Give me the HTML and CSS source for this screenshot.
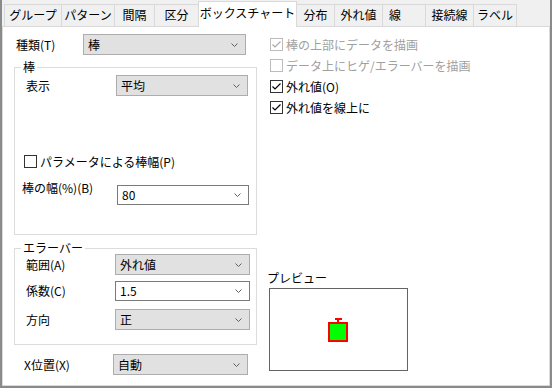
FILE: index.html
```html
<!DOCTYPE html>
<html lang="ja">
<head>
  <meta charset="UTF-8" />
  <title>ボックスチャート</title>
  <link rel="stylesheet" href="styles.css">
</head>
<body>

<div class="dialog">
  <div class="tabs">
    <div class="tab tab-group">グループ</div>
    <div class="tab tab-pattern">パターン</div>
    <div class="tab tab-gap">間隔</div>
    <div class="tab tab-div">区分</div>
    <div class="tab tab-box active">ボックスチャート</div>
    <div class="tab tab-dist">分布</div>
    <div class="tab tab-out">外れ値</div>
    <div class="tab tab-line">線</div>
    <div class="tab tab-conn">接続線</div>
    <div class="tab tab-label">ラベル</div>
  </div>

  <div class="panel">
    <!-- left column -->
    <div class="col-left">
      <div class="row row-type">
        <span class="lbl lbl-type">種類(T)</span>
        <div class="combo combo-type"><span>棒</span><svg class="chev" width="7" height="4"><polyline points="0.5,0.5 3.5,3.5 6.5,0.5"/></svg></div>
      </div>

      <fieldset class="group group-bar">
        <legend>棒</legend>
        <div class="row row-show">
          <span class="lbl lbl-show">表示</span>
          <div class="combo combo-show"><span>平均</span><svg class="chev" width="7" height="4"><polyline points="0.5,0.5 3.5,3.5 6.5,0.5"/></svg></div>
        </div>
        <label class="checkrow checkrow-param">
          <span class="check"></span>
          <span>パラメータによる棒幅(P)</span>
        </label>
        <div class="row row-width">
          <span class="lbl lbl-width">棒の幅(%)(B)</span>
          <div class="combo edit combo-width"><span>80</span><svg class="chev" width="7" height="4"><polyline points="0.5,0.5 3.5,3.5 6.5,0.5"/></svg></div>
        </div>
      </fieldset>

      <fieldset class="group group-err">
        <legend>エラーバー</legend>
        <div class="row row-range">
          <span class="lbl lbl-err">範囲(A)</span>
          <div class="combo combo-err"><span>外れ値</span><svg class="chev" width="7" height="4"><polyline points="0.5,0.5 3.5,3.5 6.5,0.5"/></svg></div>
        </div>
        <div class="row row-coef">
          <span class="lbl lbl-err">係数(C)</span>
          <div class="combo edit combo-err"><span>1.5</span><svg class="chev" width="7" height="4"><polyline points="0.5,0.5 3.5,3.5 6.5,0.5"/></svg></div>
        </div>
        <div class="row row-dir">
          <span class="lbl lbl-err">方向</span>
          <div class="combo combo-err"><span>正</span><svg class="chev" width="7" height="4"><polyline points="0.5,0.5 3.5,3.5 6.5,0.5"/></svg></div>
        </div>
      </fieldset>

      <div class="row row-xpos">
        <span class="lbl lbl-xpos">X位置(X)</span>
        <div class="combo combo-xpos"><span>自動</span><svg class="chev" width="7" height="4"><polyline points="0.5,0.5 3.5,3.5 6.5,0.5"/></svg></div>
      </div>
    </div>

    <!-- right column -->
    <div class="col-right">
      <label class="checkrow disabled">
        <span class="check"><svg width="11" height="11"><polyline points="1.5,5.5 4,8 9.5,2.5"/></svg></span>
        <span>棒の上部にデータを描画</span>
      </label>
      <label class="checkrow disabled">
        <span class="check"></span>
        <span>データ上にヒゲ/エラーバーを描画</span>
      </label>
      <label class="checkrow">
        <span class="check"><svg width="11" height="11"><polyline points="1.5,5.5 4,8 9.5,2.5"/></svg></span>
        <span>外れ値(O)</span>
      </label>
      <label class="checkrow">
        <span class="check"><svg width="11" height="11"><polyline points="1.5,5.5 4,8 9.5,2.5"/></svg></span>
        <span>外れ値を線上に</span>
      </label>

      <div class="preview">
        <div class="preview-title">プレビュー</div>
        <div class="preview-box">
          <svg width="137" height="81">
            <line x1="65" y1="30" x2="72" y2="30" stroke="#ff0000" stroke-width="2"/>
            <line x1="68" y1="30" x2="68" y2="34" stroke="#ff0000" stroke-width="2"/>
            <rect x="59" y="34" width="18" height="18" fill="#00ff00" stroke="#ff0000" stroke-width="2"/>
          </svg>
        </div>
      </div>
    </div>
  </div>
</div>

</body>
</html>
```

FILE: styles.css
```css
body {
  margin: 0;
  font-family: "Noto Sans CJK JP", "Noto Sans", sans-serif;
  font-size: 12px;
  color: #000;
  background: #f0f0f0;
}

.dialog {
  width: 552px;
  height: 388px;
  box-sizing: border-box;
  background: #f0f0f0;
  border-left: 2px solid #8a8a8a;
  border-right: 2px solid #8a8a8a;
  border-bottom: 2px solid #8a8a8a;
  display: flex;
  flex-direction: column;
}

/* Tabs */
.tabs {
  display: flex;
  align-items: flex-end;
  height: 26px;
  padding-left: 2px;
}

.tab {
  height: 22px;
  box-sizing: border-box;
  border: 1px solid #d9d9d9;
  border-bottom: none;
  margin-right: -1px;
  background: #f0f0f0;
  line-height: 20px;
  text-align: center;
  white-space: nowrap;
}

.tab.active {
  position: relative;
  z-index: 1;
  height: 26px;
  margin-bottom: -1px;
  background: #fff;
  line-height: 22px;
}

.tab-group { width: 58px; }
.tab-pattern { width: 54px; }
.tab-gap { width: 41px; }
.tab-div { width: 45px; }
.tab-box { width: 99px; }
.tab-dist { width: 39px; }
.tab-out { width: 49px; }
.tab-line { width: 44px; text-align: left; padding-left: 6px; }
.tab-conn { width: 49px; }
.tab-label { width: 44px; }

/* Panel */
.panel {
  flex: 1;
  display: flex;
  background: #fff;
  border: 1px solid #d9d9d9;
}

.col-left {
  width: 243px;
  margin-left: 11px;
}

.col-right {
  margin-left: 13px;
  padding-top: 11px;
}

.row {
  display: flex;
  align-items: center;
}

.lbl {
  line-height: 14px;
  white-space: nowrap;
}

/* Combo boxes */
.combo {
  height: 21px;
  box-sizing: border-box;
  display: flex;
  align-items: center;
  justify-content: space-between;
  padding: 0 7px 0 4px;
  background: #e1e1e1;
  border: 1px solid #adadad;
  line-height: 14px;
}

.combo.edit {
  height: 20px;
  background: #fff;
  border-color: #7a7a7a;
}

.chev polyline {
  fill: none;
  stroke: #606060;
  stroke-width: 1;
}

.row-type { margin-top: 7px; }
.lbl-type { width: 67px; margin-left: 2px; }
.combo-type { width: 163px; }

/* Group boxes */
.group {
  margin: 0;
  padding: 0;
  border: 1px solid #dcdcdc;
  min-width: 0;
}

.group legend {
  padding: 0 2px;
  margin-left: 6px;
  line-height: 12px;
}

.group-bar {
  margin-top: 6px;
  padding-bottom: 29px;
}

.row-show { margin-top: 2px; }
.lbl-show { width: 90px; margin-left: 11px; }
.combo-show { width: 132px; }

.checkrow {
  display: flex;
  align-items: center;
  gap: 3px;
  height: 13px;
  line-height: 13px;
  white-space: nowrap;
}

.checkrow-param {
  margin-top: 59px;
  margin-left: 9px;
}

.row-width {
  margin-top: 13px;
  align-items: flex-start;
}

.lbl-width { width: 95px; margin-left: 7px; }
.combo-width { width: 132px; margin-top: 4px; }

.group-err {
  margin-top: 7px;
  padding-bottom: 14px;
}

.lbl-err { width: 89px; margin-left: 11px; }
.combo-err { width: 135px; }

.row-coef { margin-top: 6px; }
.row-dir { margin-top: 8px; }

.row-xpos { margin-top: 9px; }
.lbl-xpos { width: 89px; margin-left: 10px; }
.combo-xpos { width: 135px; }

/* Check boxes */
.check {
  width: 13px;
  height: 13px;
  box-sizing: border-box;
  border: 1px solid #333;
  background: #fff;
  display: flex;
  align-items: center;
  justify-content: center;
  flex-shrink: 0;
}

.check polyline {
  fill: none;
  stroke: #000;
  stroke-width: 1.2;
}

.col-right .checkrow {
  margin-bottom: 8px;
}

.checkrow.disabled {
  color: #a0a0a0;
}

.checkrow.disabled .check {
  border-color: #bcbcbc;
}

.checkrow.disabled .check polyline {
  stroke: #a8a8a8;
}

/* Preview */
.preview {
  margin-top: 157px;
  margin-left: -3px;
}

.preview-title {
  line-height: 14px;
}

.preview-box {
  width: 139px;
  height: 83px;
  box-sizing: border-box;
  margin-top: 3px;
  margin-left: 2px;
  border: 1px solid #646464;
  display: flex;
}
```
